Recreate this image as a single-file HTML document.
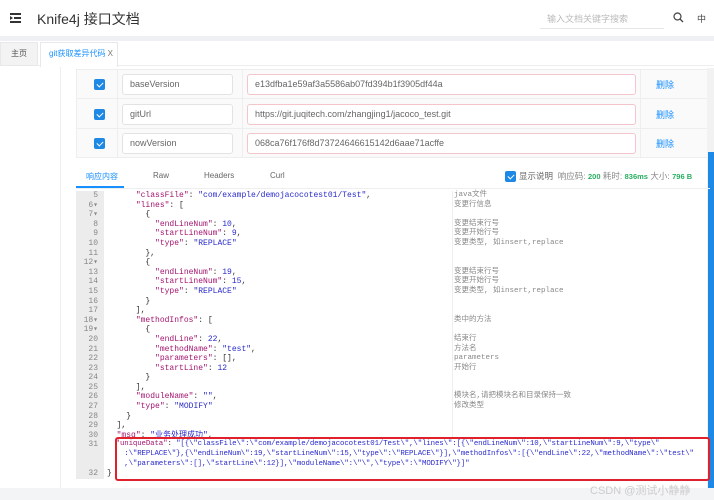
<!DOCTYPE html>
<html><head><meta charset="utf-8"><style>
*{margin:0;padding:0;box-sizing:border-box}
body{width:714px;height:500px;overflow:hidden;background:#fff;font-family:"Liberation Sans","Noto Sans CJK SC",sans-serif;position:relative}
.a{position:absolute}
.inp{position:absolute;border:1px solid #e3e3e3;border-radius:3px;height:21px;font-size:9px;color:#666;padding-left:7px;line-height:19px}
.red{border-color:#f3c6cb}
.cb{position:absolute;width:11px;height:11px;background:#1e88e5;border-radius:2px}
.cb:after{content:"";position:absolute;left:3.5px;top:1.5px;width:3px;height:5px;border:solid #fff;border-width:0 1.5px 1.5px 0;transform:rotate(45deg)}
.del{position:absolute;font-size:9px;color:#1890ff}
.code{position:absolute;left:76px;top:191px;width:634px;font-family:"Liberation Mono","Noto Sans CJK SC",monospace;font-size:8px;}
.l{height:9.6px;line-height:9.6px;position:relative;white-space:pre}
.n{position:absolute;left:0;width:28px;text-align:right;color:#888;padding-right:6px;background:#ececec;height:100%}
.t{position:absolute;left:31px;color:#333}
.c{position:absolute;left:378px;color:#888;font-size:7.5px}
.k{color:#a3156f}.s{color:#2a2acb}.v{color:#2a2acb}
</style></head><body>
<div class="a" style="left:10px;top:13px;width:11px;height:10px">
<div class="a" style="left:0;top:0;width:11px;height:1.5px;background:#333"></div>
<div class="a" style="left:4px;top:4px;width:7px;height:1.5px;background:#333"></div>
<div class="a" style="left:0;top:8px;width:11px;height:1.5px;background:#333"></div>
<div class="a" style="left:0;top:3px;width:0;height:0;border:2px solid transparent;border-left:3px solid #333"></div>
</div>
<div class="a" style="left:37px;top:9px;font-size:14px;color:#333">Knife4j 接口文档</div>
<div class="a" style="left:547px;top:12px;font-size:9px;color:#bbb">输入文档关键字搜索</div>
<div class="a" style="left:540px;top:28px;width:124px;height:1px;background:#e5e5e5"></div>
<svg class="a" style="left:673px;top:12px" width="11" height="11" viewBox="0 0 11 11"><circle cx="4.5" cy="4.5" r="3.5" fill="none" stroke="#444" stroke-width="1.2"/><path d="M7 7L10 10" stroke="#444" stroke-width="1.3"/></svg>
<div class="a" style="left:697px;top:12px;font-size:9px;color:#444">中</div>
<div class="a" style="left:0;top:36px;width:714px;height:5px;background:#eef0f3"></div>
<div class="a" style="left:0;top:41px;width:714px;height:25px;background:#fff;border-bottom:1px solid #eee"></div>
<div class="a" style="left:0;top:42px;width:38px;height:24px;background:#f3f3f3;border:1px solid #e8e8e8;font-size:8px;color:#555;text-align:center;line-height:22px">主页</div>
<div class="a" style="left:40px;top:42px;width:78px;height:25px;background:#fff;border:1px solid #e8e8e8;border-bottom:none;font-size:8px;color:#1890ff;line-height:22px;padding-left:8px">git获取差异代码 <span style="color:#777">X</span></div>
<div class="a" style="left:60px;top:67px;width:1px;height:433px;background:#eee"></div>
<div class="a" style="left:76px;top:69px;width:634px;height:89px;background:#fafafa;border:1px solid #eee"></div>
<div class="a" style="left:76px;top:98px;width:634px;height:1px;background:#eee"></div>
<div class="a" style="left:76px;top:128px;width:634px;height:1px;background:#eee"></div>
<div class="a" style="left:117px;top:69px;width:1px;height:89px;background:#eee"></div>
<div class="a" style="left:242px;top:69px;width:1px;height:89px;background:#eee"></div>
<div class="a" style="left:640px;top:69px;width:1px;height:89px;background:#eee"></div>
<div class="cb" style="left:94px;top:79px"></div>
<div class="cb" style="left:94px;top:109px"></div>
<div class="cb" style="left:94px;top:138px"></div>
<div class="inp" style="left:122px;top:74px;width:111px;background:#fff">baseVersion</div>
<div class="inp" style="left:122px;top:104px;width:111px;background:#fff">gitUrl</div>
<div class="inp" style="left:122px;top:133px;width:111px;background:#fff">nowVersion</div>
<div class="inp red" style="left:247px;top:74px;width:389px;background:#fff">e13dfba1e59af3a5586ab07fd394b1f3905df44a</div>
<div class="inp red" style="left:247px;top:104px;width:389px;background:#fff">https://git.juqitech.com/zhangjing1/jacoco_test.git</div>
<div class="inp red" style="left:247px;top:133px;width:389px;background:#fff">068ca76f176f8d73724646615142d6aae71acffe</div>
<div class="del" style="left:656px;top:78px">删除</div>
<div class="del" style="left:656px;top:108px">删除</div>
<div class="del" style="left:656px;top:137px">删除</div>
<div class="a" style="left:707px;top:68px;width:7px;height:432px;background:#f2f2f2"></div>
<div class="a" style="left:708px;top:152px;width:6px;height:348px;background:#1e88e5"></div>
<div class="a" style="left:86px;top:171px;font-size:8px;color:#1890ff">响应内容</div>
<div class="a" style="left:153px;top:171px;font-size:8px;color:#666">Raw</div>
<div class="a" style="left:204px;top:171px;font-size:8px;color:#666">Headers</div>
<div class="a" style="left:270px;top:171px;font-size:8px;color:#666">Curl</div>
<div class="a" style="left:76px;top:188px;width:634px;height:1px;background:#eee"></div>
<div class="a" style="left:76px;top:186px;width:48px;height:2px;background:#1890ff"></div>
<div class="cb" style="left:505px;top:171px"></div>
<div class="a" style="left:519px;top:170px;font-size:8.5px;color:#666;white-space:nowrap">显示说明 &nbsp;<span style="color:#888">响应码:</span> <b style="color:#27ae60;font-size:7.5px">200</b> <span style="color:#888">耗时:</span> <b style="color:#27ae60;font-size:7.5px">836ms</b> <span style="color:#888">大小:</span> <b style="color:#27ae60;font-size:7.5px">796 B</b></div>
<div class="a" style="left:452px;top:191px;width:1px;height:246px;background:#eee"></div>
<div class="code">
<div class="l"><span class="n">5</span><span class="t">      <span class="k">"classFile"</span>: <span class="s">"com/example/demojacocotest01/Test"</span>,</span><span class="c">java文件</span></div>
<div class="l"><span class="n">6▾</span><span class="t">      <span class="k">"lines"</span>: [</span><span class="c">变更行信息</span></div>
<div class="l"><span class="n">7▾</span><span class="t">        {</span></div>
<div class="l"><span class="n">8</span><span class="t">          <span class="k">"endLineNum"</span>: <span class="v">10</span>,</span><span class="c">变更结束行号</span></div>
<div class="l"><span class="n">9</span><span class="t">          <span class="k">"startLineNum"</span>: <span class="v">9</span>,</span><span class="c">变更开始行号</span></div>
<div class="l"><span class="n">10</span><span class="t">          <span class="k">"type"</span>: <span class="s">"REPLACE"</span></span><span class="c">变更类型, 如insert,replace</span></div>
<div class="l"><span class="n">11</span><span class="t">        },</span></div>
<div class="l"><span class="n">12▾</span><span class="t">        {</span></div>
<div class="l"><span class="n">13</span><span class="t">          <span class="k">"endLineNum"</span>: <span class="v">19</span>,</span><span class="c">变更结束行号</span></div>
<div class="l"><span class="n">14</span><span class="t">          <span class="k">"startLineNum"</span>: <span class="v">15</span>,</span><span class="c">变更开始行号</span></div>
<div class="l"><span class="n">15</span><span class="t">          <span class="k">"type"</span>: <span class="s">"REPLACE"</span></span><span class="c">变更类型, 如insert,replace</span></div>
<div class="l"><span class="n">16</span><span class="t">        }</span></div>
<div class="l"><span class="n">17</span><span class="t">      ],</span></div>
<div class="l"><span class="n">18▾</span><span class="t">      <span class="k">"methodInfos"</span>: [</span><span class="c">类中的方法</span></div>
<div class="l"><span class="n">19▾</span><span class="t">        {</span></div>
<div class="l"><span class="n">20</span><span class="t">          <span class="k">"endLine"</span>: <span class="v">22</span>,</span><span class="c">结束行</span></div>
<div class="l"><span class="n">21</span><span class="t">          <span class="k">"methodName"</span>: <span class="s">"test"</span>,</span><span class="c">方法名</span></div>
<div class="l"><span class="n">22</span><span class="t">          <span class="k">"parameters"</span>: [],</span><span class="c">parameters</span></div>
<div class="l"><span class="n">23</span><span class="t">          <span class="k">"startLine"</span>: <span class="v">12</span></span><span class="c">开始行</span></div>
<div class="l"><span class="n">24</span><span class="t">        }</span></div>
<div class="l"><span class="n">25</span><span class="t">      ],</span></div>
<div class="l"><span class="n">26</span><span class="t">      <span class="k">"moduleName"</span>: <span class="s">""</span>,</span><span class="c">模块名,请把模块名和目录保持一致</span></div>
<div class="l"><span class="n">27</span><span class="t">      <span class="k">"type"</span>: <span class="s">"MODIFY"</span></span><span class="c">修改类型</span></div>
<div class="l"><span class="n">28</span><span class="t">    }</span></div>
<div class="l"><span class="n">29</span><span class="t">  ],</span></div>
<div class="l"><span class="n">30</span><span class="t">  <span class="k">"msg"</span>: <span class="s">"业务处理成功"</span>,</span></div>
<div class="l" style="height:28.8px"><span class="n">31</span><span class="t" style="line-height:9.6px;font-size:7.4px;letter-spacing:-0.12px">  <span class="k">"uniqueData"</span>: <span class="s">"[{\"classFile\":\"com/example/demojacocotest01/Test\",\"lines\":[{\"endLineNum\":10,\"startLineNum\":9,\"type\"
    :\"REPLACE\"},{\"endLineNum\":19,\"startLineNum\":15,\"type\":\"REPLACE\"}],\"methodInfos\":[{\"endLine\":22,\"methodName\":\"test\"
    ,\"parameters\":[],\"startLine\":12}],\"moduleName\":\"\",\"type\":\"MODIFY\"}]"</span></span></div>
<div class="l"><span class="n">32</span><span class="t">}</span></div>
</div>
<div class="a" style="left:115px;top:437px;width:595px;height:44px;border:2px solid #e0202a;border-radius:3px"></div>
<div class="a" style="left:0;top:488px;width:714px;height:12px;background:#f3f4f6"></div>
<div class="a" style="left:590px;top:482px;font-size:11px;color:#ccc">CSDN @测试小静静</div>
</body></html>
